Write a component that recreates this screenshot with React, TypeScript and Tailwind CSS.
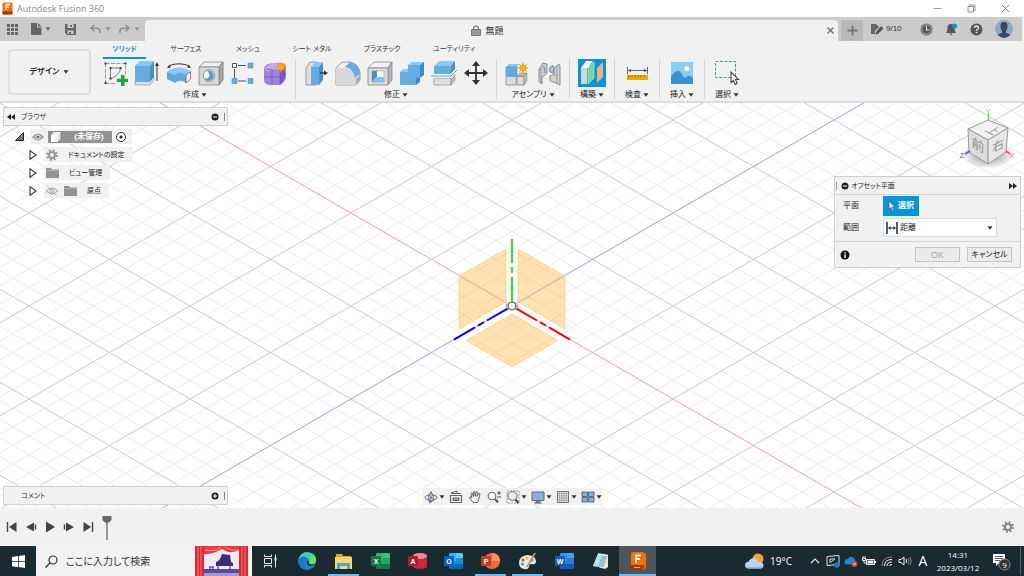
import type { ReactNode } from "react";

const JP = "font-['Liberation_Sans','Noto_Sans_CJK_JP',sans-serif]";

type P = { children: ReactNode; w?: number; h?: number; box?: string };

function Svg({ children, w = 16, h = 16, box }: P) {
  return (
    <svg width={w} height={h} viewBox={box ?? `0 0 ${w} ${h}`} fill="none" className="block shrink-0" aria-hidden="true">
      {children}
    </svg>
  );
}

function Caret({ color = "#333" }: { color?: string }) {
  return (
    <Svg w={6} h={4}>
      <path d="M0.5 0.3h5L3 3.8z" fill={color} />
    </Svg>
  );
}

/* ---------- ribbon icons, 28 x 28 ---------- */

const SketchIcon = () => (
  <Svg w={28} h={28}>
    <path d="M4.5 4.500v20M4.500 4.500h20v11M4.500 24.500h11" stroke="#999" strokeDasharray="4 1.500" />
    <path d="M3.500 3.500h2v2h-2zM23.500 3.500h2v2h-2zM3.500 23h2v2h-2z" fill="#444" />
    <path d="M9.500 8.500v11M9.500 19.500C15 18 19 14 19.500 9.500M9.500 9h10" stroke="#777" />
    <path d="M8.500 8h2v2h-2zM18.500 8h2v2h-2zM8.500 18.500h2v2h-2z" fill="#444" />
    <path d="M20 16h3.500v3.800H27V23h-3.500v4H20v-4h-4v-3.200h4z" fill="#20a64a" />
  </Svg>
);

const ExtrudeIcon = () => (
  <Svg w={28} h={28}>
    <path d="M2 22l4-4h15v3l-4 5H2z" fill="#ddd" stroke="#999" strokeWidth=".7" />
    <path d="M2 7l5-5h14l-4 5z" fill="#8cc8f3" />
    <path d="M2 7h15v16H2z" fill="#64ade3" />
    <path d="M17 7l4-5v16l-4 5z" fill="#4791c9" />
    <path d="M24 22V5" stroke="#333" />
    <path d="M22 7L24 3l2 4z" fill="#333" />
  </Svg>
);

const RevolveIcon = () => (
  <Svg w={28} h={28}>
    <path d="M3.500 7.500C8 4 20 4 24.500 7.500" stroke="#333" />
    <path d="M2 9l2.500-3.500 1.300 3zM26 9l-2.500-3.500-1.300 3z" fill="#333" />
    <path d="M2 13C8 7 20 7 26 13l-5 3c-3-3-8-3-11 0z" fill="#8cc8f3" />
    <path d="M2 13l8 3c3-3 8-3 11 0v8c-3-3-8-3-11 0L2 20z" fill="#5fa9df" />
    <path d="M21 16l4.500-3v7L21 24z" fill="#f3f3f3" stroke="#666" strokeWidth=".8" />
  </Svg>
);

const HoleIcon = () => (
  <Svg w={28} h={28}>
    <path d="M2 8l5-5h19l-4 5z" fill="#eee" stroke="#888" strokeWidth=".8" />
    <path d="M22 8l4-5v18l-4 5z" fill="#a9a9a9" stroke="#777" strokeWidth=".8" />
    <path d="M2 8h20v18H2z" fill="#d7d7d7" stroke="#888" strokeWidth=".8" />
    <circle cx="12" cy="16.500" r="5.800" fill="#f4f4f4" stroke="#777" strokeWidth=".8" />
    <path d="M10 12a5 5 0 1 1-2.500 7.500q5 .5 5-3.500 0-2-2.500-4z" fill="#4e9fd8" />
  </Svg>
);

const PatternIcon = () => (
  <Svg w={28} h={28}>
    <path d="M9 6.500h8M5.500 10v9M9 22h8" stroke="#555" />
    <path d="M3.500 4.500h4v4h-4z" fill="#fff" stroke="#555" />
    <path d="M19 4h5v5h-5zM3 19.500h5v5H3zM19 19.500h5v5h-5z" fill="#64ade3" stroke="#4791c9" strokeWidth=".6" />
  </Svg>
);

const FormIcon = () => (
  <Svg w={28} h={28}>
    <path d="M3 10q0-3 4-5l6-1q11-1 12 3v12q-1 4-6 7H8q-5-1-5-5z" fill="#a183df" />
    <path d="M4 9q5-5 11-5l8 2-5 6H5z" fill="#c5aaf2" />
    <path d="M19 12l5-5v12q-2 4-5 6z" fill="#7e57c2" />
    <path d="M3 18h16l6-4M11 10v16M19 11v15M5 10q7 2 14 1" stroke="#7a55c4" strokeWidth=".8" />
    <Burst x={20} y={8} />
  </Svg>
);

function Burst({ x, y }: { x: number; y: number }) {
  return (
    <g transform={`translate(${x} ${y})`}>
      <path d="M0-6L1.200-2.500 4.200-4.200 2.500-1.200 6 0 2.500 1.200 4.200 4.200 1.200 2.500 0 6-1.200 2.500-4.200 4.200-2.500 1.200-6 0-2.500-1.200-4.200-4.200-1.200-2.500z" fill="#f59b00" />
      <circle r="2.600" fill="#ffae14" />
    </g>
  );
}

const PressPullIcon = () => (
  <Svg w={28} h={28}>
    <path d="M4 9l4-6h6v23H4z" fill="#dedede" stroke="#888" strokeWidth=".8" />
    <path d="M9 8l5-5h7l-4 5z" fill="#8cc8f3" />
    <path d="M9 8h8v18H9z" fill="#64ade3" />
    <path d="M17 8l4-5v18l-4 5z" fill="#4791c9" />
    <path d="M18 14h5" stroke="#333" strokeWidth="1.200" />
    <path d="M22 11.500l4 2.500-4 2.500z" fill="#333" />
  </Svg>
);

const FilletIcon = () => (
  <Svg w={28} h={28}>
    <path d="M2 9l6-6h7c7 1 11 6 11 12v6l-4 5H2z" fill="#ececec" stroke="#888" strokeWidth=".8" />
    <path d="M2 9h9c6 0 11 5 11 11v6H2z" fill="#d8d8d8" />
    <path d="M11 8l5-5c6 0 10 6 10 12l-5 4C20 13 17 9 11 8z" fill="#64ade3" />
    <path d="M22 20l4-4v5l-4 5z" fill="#aaa" />
  </Svg>
);

const ShellIcon = () => (
  <Svg w={28} h={28}>
    <path d="M2 9l6-6h18l-4 6z" fill="#f2f2f2" stroke="#888" strokeWidth=".8" />
    <path d="M22 9l4-6v18l-4 5z" fill="#b5b5b5" stroke="#888" strokeWidth=".8" />
    <path d="M2 9h20v17H2z" fill="#dcdcdc" stroke="#888" strokeWidth=".8" />
    <path d="M6 12h12v11H6z" fill="#fff" stroke="#999" strokeWidth=".6" />
    <path d="M6 12h5v6l-5 5z" fill="#4791c9" />
    <path d="M6 23l5-5h7v5z" fill="#7fc0ee" />
  </Svg>
);

const CombineIcon = () => (
  <Svg w={28} h={28}>
    <path d="M10 6l4-3h12l-4 3z" fill="#8cc8f3" />
    <path d="M2 13l3-3h5v3z" fill="#8cc8f3" />
    <path d="M10 6h12v13h-4v7H2V13h8z" fill="#64ade3" />
    <path d="M22 6l4-3v13l-4 3zM18 19h4v4l-4 3z" fill="#4189c0" />
  </Svg>
);

const SplitIcon = () => (
  <Svg w={28} h={28}>
    <path d="M4 7l5-5h16l-4 5z" fill="#8cc8f3" />
    <path d="M4 7h17v8H4z" fill="#64ade3" />
    <path d="M21 7l4-5v8l-4 5z" fill="#4791c9" />
    <path d="M4 19h17v7H4z" fill="#dedede" stroke="#999" strokeWidth=".8" />
    <path d="M21 19l4-4v6l-4 5z" fill="#bbb" stroke="#888" strokeWidth=".6" />
    <path d="M1 17h20l6-6" stroke="#fff" strokeWidth="3" />
    <path d="M1 17h20l6-6" stroke="#4f9fdb" />
  </Svg>
);

const MoveIcon = () => (
  <Svg w={28} h={28}>
    <path d="M14 5v18M5 14h18" stroke="#2e3136" strokeWidth="1.800" />
    <path d="M14 2l4 5h-8zM14 26l4-5h-8zM2 14l5-4v8zM26 14l-5-4v8z" fill="#2e3136" />
  </Svg>
);

const AssembleIcon = () => (
  <Svg w={28} h={28}>
    <path d="M3 8l3-3h10l-2 3z" fill="#8cc8f3" />
    <path d="M3 8h11v9H3z" fill="#64ade3" stroke="#4791c9" strokeWidth=".6" />
    <path d="M3 17.500h10V26H3zM14 17.500h7V26h-7z" fill="#dcdcdc" stroke="#888" strokeWidth=".8" />
    <path d="M14 17l3-3h7l-3 3zM21 17.500l3-3V22l-3 4z" fill="#bbb" stroke="#888" strokeWidth=".6" />
    <Burst x={20} y={9} />
  </Svg>
);

const JointIcon = () => (
  <Svg w={28} h={28}>
    <path d="M4 10l4-6 4 1v9l-3 3-2 1v7l-3-2z" fill="#d0d0d0" stroke="#777" strokeWidth=".8" />
    <path d="M4 10l2 1v13M6 11l3-5" stroke="#888" strokeWidth=".7" />
    <path d="M9.500 8v6" stroke="#5ba8df" strokeWidth="1.500" />
    <path d="M24 5l-5 4v6l-4 2v5l6 2 4 2V7z" fill="#d0d0d0" stroke="#777" strokeWidth=".8" />
    <path d="M15 8l3-1.500q2 4 0 7.500L15 13q-1.500-2 0-5z" fill="#bbb" stroke="#777" strokeWidth=".7" />
    <path d="M18 7q2 4 0 7" stroke="#5ba8df" strokeWidth="1.300" />
    <path d="M19 15l3 2v7M22 17V7" stroke="#888" strokeWidth=".7" />
  </Svg>
);

const PlaneIcon = () => (
  <Svg w={28} h={28}>
    <path d="M0 0h28v28H0z" fill="#0696d7" />
    <path d="M3 9l5-7h7l-5 7z" fill="#f6f6f6" />
    <path d="M3 9h6v16H3z" fill="#d3d7da" />
    <path d="M10 9l6-6v16l-6 6z" fill="#7ad19b" stroke="#e9fff1" strokeWidth=".5" />
    <path d="M19 9l6-6v15l-6 6z" fill="#f3ae80" />
  </Svg>
);

const MeasureIcon = () => (
  <Svg w={28} h={28}>
    <path d="M4.500 8v7M24.500 8v7M5 11.500h19" stroke="#666" />
    <path d="M5 11.500l3-1.800v3.600zM24 11.500l-3-1.800v3.600z" fill="#555" />
    <path d="M4 16h21v5H4z" fill="#f5a800" />
    <path d="M6 16v2.500M9 16v2M12 16v2.500M15 16v2M18 16v2.500M21 16v2" stroke="#8a5d00" strokeWidth=".8" />
  </Svg>
);

const InsertIcon = () => (
  <Svg w={28} h={28}>
    <path d="M3 3h22v22H3z" fill="#84ccfb" />
    <circle cx="19" cy="9.500" r="2.600" fill="#fffbd6" stroke="#f0d878" strokeWidth=".5" />
    <path d="M3 17c3-2 4-5 7-5s5 6 7 7c2-1 3-3 5-2 1 0 2 2 3 2v6H3z" fill="#3c90cd" />
  </Svg>
);

const SelectIcon = () => (
  <Svg w={28} h={28}>
    <path d="M2.500 2.500h20v16h-20z" stroke="#3aaa64" strokeDasharray="3 1.500" />
    <path d="M18 13v10.500l2.500-2 1.700 4 2-1-1.700-4h3z" fill="#fff" stroke="#444" strokeWidth="1.100" />
  </Svg>
);

const groups: { label: string; pad: string; icons: [string, () => ReactNode][] }[] = [
  {
    label: "作成",
    pad: "px-1",
    icons: [
      ["スケッチを作成", SketchIcon],
      ["押し出し", ExtrudeIcon],
      ["回転", RevolveIcon],
      ["穴", HoleIcon],
      ["パターン", PatternIcon],
      ["フォームを作成", FormIcon],
    ],
  },
  {
    label: "修正",
    pad: "px-1",
    icons: [
      ["プレス/プル", PressPullIcon],
      ["フィレット", FilletIcon],
      ["シェル", ShellIcon],
      ["結合", CombineIcon],
      ["分割", SplitIcon],
      ["移動", MoveIcon],
    ],
  },
  { label: "アセンブリ", pad: "px-1", icons: [["コンポーネント", AssembleIcon], ["ジョイント", JointIcon]] },
  { label: "構築", pad: "px-1.5", icons: [["オフセット平面", PlaneIcon]] },
  { label: "検査", pad: "px-1.5", icons: [["計測", MeasureIcon]] },
  { label: "挿入", pad: "px-1.5", icons: [["画像", InsertIcon]] },
  { label: "選択", pad: "px-1.5", icons: [["選択", SelectIcon]] },
];

const tabs = [
  { label: "ソリッド", w: "w-[43px]" },
  { label: "サーフェス", w: "w-20" },
  { label: "メッシュ", w: "w-11" },
  { label: "シート メタル", w: "w-[84px]" },
  { label: "プラスチック", w: "w-14" },
  { label: "ユーティリティ", w: "w-[88px]" },
];

/* ---------- window chrome ---------- */

function TitleBar() {
  return (
    <header className="flex h-[17px] items-center bg-white pr-0.5">
      <span className="flex flex-1 items-center gap-1 pl-0.5">
        <Svg w={11} h={13}>
          <rect x=".5" y=".5" width="10" height="12" rx="1.500" fill="#ff6b00" />
          <path d="M.5 9.500h10v2q0 1-1 1h-8q-1 0-1-1z" fill="#9c3f04" />
          <path d="M4 8V2.500h4M4 5h3" stroke="#fff" strokeWidth="1.400" />
        </Svg>
        <h1 className="font-['Open_Sans',sans-serif] text-[9px] leading-3 text-[#8a8a8a]">Autodesk Fusion 360</h1>
      </span>
      <button aria-label="最小化" className="flex w-[34px] justify-center"><Svg w={9} h={9}><path d="M.5 4.500h8" stroke="#999" /></Svg></button>
      <button aria-label="元に戻す" className="flex w-[34px] justify-center"><Svg w={9} h={9}><path d="M1 2.500h5.500v5.500H1zM2.500 2.500V1H8v5.500H6.500" stroke="#888" strokeWidth=".9" /></Svg></button>
      <button aria-label="閉じる" className="flex w-[34px] justify-center"><Svg w={9} h={9}><path d="M1 1l7 7M8 1L1 8" stroke="#888" strokeWidth=".9" /></Svg></button>
    </header>
  );
}

function DocumentBar() {
  return (
    <div className="mr-0.5 flex h-6 items-end bg-[#cbcbcb]">
      <div className="flex h-6 w-[145px] items-center pl-[7px]">
        <button aria-label="データ パネル">
          <Svg w={11} h={11}><path d="M0 0h3v3H0zM4 0h3v3H4zM8 0h3v3H8zM0 4h3v3H0zM4 4h3v3H4zM8 4h3v3H8zM0 8h3v3H0zM4 8h3v3H4zM8 8h3v3H8z" fill="#666" /></Svg>
        </button>
        <button aria-label="ファイル" className="ml-3 flex items-center gap-[3px]">
          <Svg w={12} h={12}><path d="M1 0h6v4.500h4.500V12H1z" fill="#666" /><path d="M8 0l3.500 3.500H8z" fill="#666" /></Svg>
          <Caret color="#666" />
        </button>
        <button aria-label="保存" className="ml-3.5">
          <Svg w={11} h={11}><path d="M0 0h11v11H2L0 9z" fill="#666" /><path d="M2.500 0h6v4h-6zM2.500 6.500h6V10h-6z" fill="#cbcbcb" /><path d="M5 1h2v2H5zM4 8h2v2H4z" fill="#666" /></Svg>
        </button>
        <button aria-label="元に戻す" className="ml-3.5 flex items-center gap-1">
          <Svg w={11} h={10}><path d="M4.500 1L1 4.200l3.500 3.300M1.500 4.200H7q3 0 3 3V9" stroke="#8f8f8f" strokeWidth="1.600" /></Svg>
          <Caret color="#8f8f8f" />
        </button>
        <button aria-label="やり直し" className="ml-2 flex items-center gap-1">
          <Svg w={11} h={10}><path d="M6.500 1L10 4.200 6.500 7.500M9.500 4.200H4q-3 0-3 3V9" stroke="#8f8f8f" strokeWidth="1.600" /></Svg>
          <Caret color="#8f8f8f" />
        </button>
      </div>
      <div className="flex h-[21px] flex-1 items-center rounded-t-sm bg-[#f1f1f1] pr-[3px]">
        <span className="flex flex-1 items-center justify-center gap-1 pl-1">
          <Svg w={10} h={11}><path d="M2.500 5V3.500q0-2.500 2.500-2.500t2.500 2.500V5" stroke="#777" strokeWidth="1.200" /><path d="M.5 4.500h9v6h-9z" fill="#999" stroke="#666" strokeWidth=".8" /></Svg>
          <span className="text-[9px] leading-3 text-[#333]">無題</span>
        </span>
        <button aria-label="タブを閉じる"><Svg w={9} h={9}><path d="M1.500 1.500l6 6M7.500 1.500l-6 6" stroke="#666" strokeWidth="1.200" /></Svg></button>
      </div>
      <button aria-label="新しいデザイン" className="ml-[3px] flex h-[21px] w-[22px] items-center justify-center bg-[#b8b8b8]">
        <Svg w={11} h={11}><path d="M5.500.5v10M.5 5.500h10" stroke="#777" strokeWidth="2" /></Svg>
      </button>
      <div className="flex h-6 w-[159px] items-center pl-2">
        <button className="flex items-center gap-0.5 text-[8px] leading-3 text-[#333]">
          <Svg w={13} h={12}><path d="M0 1h5l3 3-4 4v3H0z" fill="#666" /><path d="M10 3l2.500 2.500L7 11l-2.500.5L5 9z" fill="#555" /></Svg>
          9/10
        </button>
        <button aria-label="ジョブ ステータス" className="ml-[18px]">
          <Svg w={13} h={13}><circle cx="6.500" cy="6.500" r="6" fill="#666" /><circle cx="6.500" cy="6.500" r="4.600" stroke="#bbb" strokeWidth=".8" fill="#555" /><path d="M6.500 3v4h3" stroke="#ddd" strokeWidth="1.200" /></Svg>
        </button>
        <button aria-label="通知" className="ml-3">
          <Svg w={13} h={13}><path d="M6 1q3.500 0 3.500 4 0 3 1.500 5H1q1.500-2 1.500-5Q2.500 1 6 1z" fill="#555" /><path d="M4.500 10.500h3L6 12.500z" fill="#555" /><circle cx="9.500" cy="3" r="2.500" fill="#0696d7" /></Svg>
        </button>
        <button aria-label="ヘルプ" className="ml-3">
          <Svg w={13} h={13}><circle cx="6.500" cy="6.500" r="6" fill="#555" /><path d="M4.500 5q0-2 2-2t2 1.800c0 1.400-2 1.400-2 3M6.500 8.800v1.400" stroke="#e8e8e8" strokeWidth="1.400" /></Svg>
        </button>
        <button aria-label="プロファイル" className="ml-3">
          <Svg w={18} h={18}><circle cx="9" cy="9" r="9" fill="#8ea7c6" /><path d="M5.500 7q-.5-5 3.500-5t3.500 5q0 2-1.500 4v2q3 .5 4 2-2.500 3-6 3t-6-3q1-1.500 4-2v-2Q5.500 9 5.500 7z" fill="#38485f" /></Svg>
        </button>
      </div>
    </div>
  );
}

function Ribbon() {
  return (
    <div className="flex h-[62px] border-b-2 border-[#dcdcdc] bg-[#f1f1f1]">
      <button className="mt-2 ml-2 flex h-[46px] w-[83px] shrink-0 items-center justify-center gap-1 rounded-sm border-2 border-[#e0e0e0] text-[8px] font-bold text-[#333]">
        デザイン <Caret />
      </button>
      <div className="flex flex-1 flex-col pl-1">
        <div role="tablist" className="flex h-[18px] pl-2">
          {tabs.map((t, i) => (
            <button
              key={t.label}
              role="tab"
              aria-selected={i === 0}
              className={`${t.w} flex shrink-0 justify-center border-b-2 pt-0.5 text-[7px] leading-3 whitespace-nowrap ${
                i === 0 ? "border-[#0696d7] font-bold text-[#0696d7]" : "border-transparent text-[#333]"
              }`}
            >
              {t.label}
            </button>
          ))}
        </div>
        <div className="flex">
          {groups.map((g) => (
            <section key={g.label} aria-label={g.label} className={`${g.pad} h-10 border-r border-[#d4d4d4] last:border-0`}>
              <div className="flex">
                {g.icons.map(([name, Icon]) => (
                  <button key={name} aria-label={name} className="flex w-8 justify-center">
                    <Icon />
                  </button>
                ))}
              </div>
              <button className="mx-auto flex items-center gap-0.5 pt-0.5 text-[8px] leading-3 whitespace-nowrap text-[#222]">
                {g.label} <Caret />
              </button>
            </section>
          ))}
        </div>
      </div>
    </div>
  );
}

/* ---------- model canvas ---------- */

const DX = 16.1;
const DY = 9.3;

function Scene() {
  const lines = [];
  for (let k = -60; k <= 60; k++) {
    if (k === 0) continue;
    lines.push({ k, major: k % 5 === 0, c: k * DY * 2, run: 80 * DX, rise: 80 * DY });
  }
  const sorted = [...lines.filter((l) => !l.major), ...lines.filter((l) => l.major)];
  return (
    <svg className="absolute inset-0 block h-full w-full" viewBox="-512 -203 1024 405" preserveAspectRatio="xMidYMid slice" fill="none" aria-hidden="true">
      {sorted.map((l) => (
        <path
          key={l.k}
          d={`M${-l.run} ${l.c - l.rise}L${l.run} ${l.c + l.rise}M${-l.run} ${l.c + l.rise}L${l.run} ${l.c - l.rise}`}
          stroke={l.major ? "#cbcbcb" : "#ececec"}
        />
      ))}
      <path d={`M${-80 * DX} ${-80 * DY}L${80 * DX} ${80 * DY}`} stroke="#ff9c9c" />
      <path d={`M${-80 * DX} ${80 * DY}L${80 * DX} ${-80 * DY}`} stroke="#9c9cff" />
      <g fill="#ffb432" fillOpacity=".38" stroke="#ffc870" strokeOpacity=".6">
        <path d="M-6-57L-53-30V23L-6-4z" />
        <path d="M6-57L53-30V23L6-4z" />
        <path d="M0 8L46 34.500 0 61-46 34.500z" />
      </g>
      <g strokeWidth="2">
        <path d="M0-67V-43M0-39V-33M0-29V-4" stroke="#1ef01e" />
        <path d="M4 2.300L25 14.500M28 16.200L34 19.700M37 21.400L58 33.700" stroke="#f00" />
        <path d="M-4 2.300L-25 14.500M-28 16.200L-34 19.700M-37 21.400L-58 33.700" stroke="#00f" />
      </g>
      <ellipse cx="0" cy="0" rx="6" ry="3.500" fill="#ccc" stroke="#aaa" />
      <circle r="3.800" fill="#f3f3f3" stroke="#777" strokeWidth="1.300" />
    </svg>
  );
}

function ViewCube() {
  return (
    <svg className="absolute top-1 right-2 block" width="58" height="62" viewBox="0 0 58 62" aria-label="ビュー キューブ">
      <defs>
        <radialGradient id="cubeShadow"><stop offset="0" stopColor="#888" /><stop offset="1" stopColor="#888" stopOpacity="0" /></radialGradient>
      </defs>
      <ellipse cx="30" cy="48" rx="26" ry="14" fill="url(#cubeShadow)" />
      <path d="M10 22L30 13 50 21 30 33z" fill="#f1f1f1" stroke="#999" />
      <path d="M10 22L30 33V57L11 45z" fill="#dedede" stroke="#999" />
      <path d="M50 21L30 33V57L48 45z" fill="#e6e6e6" stroke="#999" />
      <path d="M30.500 13V6" stroke="#4be64b" strokeWidth="1.500" />
      <path d="M12 44l-5 3" stroke="#5555ff" strokeWidth="2" />
      <path d="M48 44l4 3" stroke="#ff5555" strokeWidth="2" />
      <g className="font-['Liberation_Sans','Noto_Sans_CJK_JP',sans-serif]" fill="#909090" textAnchor="middle">
        <text fontSize="11" transform="translate(31 26) rotate(28) skewX(-30)">上</text>
        <text fontSize="13" transform="translate(20 43) skewY(28)">前</text>
        <text fontSize="12" transform="translate(40 43) skewY(-28)">右</text>
        <text x="30" y="7" fontSize="8" fill="#7be67b">Y</text>
        <text x="4" y="51" fontSize="8" fill="#6666ff">Z</text>
        <text x="54" y="51" fontSize="8" fill="#ff6b6b">X</text>
      </g>
    </svg>
  );
}

const Gear = ({ s = 12, color = "#999" }: { s?: number; color?: string }) => (
  <Svg w={s} h={s} box="0 0 12 12">
    <circle cx="6" cy="6" r="4.800" stroke={color} strokeWidth="2.200" strokeDasharray="1.900 1.870" />
    <circle cx="6" cy="6" r="3" stroke={color} strokeWidth="2" />
  </Svg>
);

const Folder = () => (
  <Svg w={13} h={11}><path d="M0 1h5l1 1.500h7V11H0z" fill="#929292" /><path d="M0 3.500h13" stroke="#bbb" strokeWidth=".7" /></Svg>
);

const Eye = ({ off = false }: { off?: boolean }) => (
  <Svg w={12} h={10}>
    <path d="M.5 5Q6-1 11.500 5 6 11 .5 5z" stroke="#999" fill={off ? "none" : "#aaa"} />
    <circle cx="6" cy="5" r="2" stroke={off ? "#aaa" : "#eee"} fill={off ? "none" : "#666"} />
    {off && <path d="M1.500.5l9 9" stroke="#aaa" />}
  </Svg>
);

const Arrow = () => (
  <Svg w={8} h={10}><path d="M1 .8L7 5 1 9.300z" fill="#fff" stroke="#444" strokeWidth="1.200" /></Svg>
);

function RoundMark({ plus = false }: { plus?: boolean }) {
  return (
    <Svg w={8} h={8}>
      <circle cx="4" cy="4" r="3.500" fill="#222" />
      <path d={plus ? "M2 4h4M4 2v4" : "M2 4h4"} stroke="#fff" />
    </Svg>
  );
}

function PanelBar({ label, plus = false }: { label: string; plus?: boolean }) {
  return (
    <div className="flex h-[19px] w-[225px] items-center border border-[#d0d0d0] bg-[#f1f1f1] pr-px pl-[3px]">
      <span className="w-3.5">
        {!plus && <Svg w={8} h={6}><path d="M4 0v6L0 3zM8 0v6L4 3z" fill="#222" /></Svg>}
      </span>
      <h2 className="flex-1 text-[7px] leading-3 text-[#333]">{label}</h2>
      <button aria-label={plus ? "展開" : "折りたたむ"} className="mr-[5px]"><RoundMark plus={plus} /></button>
      <span className="h-2 w-0.5 border-l border-[#888]" />
    </div>
  );
}

function BrowserTree() {
  return (
    <div className="absolute top-1 left-[3px]">
      <PanelBar label="ブラウザ" />
      <ul className="flex flex-col gap-[3px] pt-[3px] text-[7px] leading-3 text-[#222]">
        <li className="flex items-center pl-3">
          <button aria-label="折りたたむ"><Svg w={9} h={9}><path d="M8.500.5v8h-8z" fill="#777" stroke="#222" /></Svg></button>
          <span className="ml-1.5 flex h-[15px] items-center bg-[#f1f1f1] pr-1.5">
            <button aria-label="表示" className="mx-0.5"><Eye /></button>
            <span className="ml-0.5 flex h-3 w-16 items-center bg-[#929292] pl-0.5 font-bold text-white">
              <Svg w={12} h={12}><path d="M1 4l3-3h7v7l-3 3H1z" fill="#ddd" stroke="#777" strokeWidth=".6" /><path d="M1 4h7v7H1z" fill="#fff" /><path d="M1 4l3-3h7L8 4z" fill="#eef3fa" /></Svg>
              <span className="flex-1 pl-1 text-center text-[8px]">(未保存)</span>
            </span>
            <input type="radio" defaultChecked aria-label="アクティブ化" className="ml-1 size-2.5 appearance-none rounded-full border border-[#333] bg-[radial-gradient(circle,#222_1px,#fff_2px)]" />
          </span>
        </li>
        {[
          { label: "ドキュメントの設定", icons: <Gear />, gap: "ml-2.5 pr-2" },
          { label: "ビュー管理", icons: <Folder />, gap: "ml-2.5 pr-2" },
          { label: "原点", icons: <><Eye off /><Folder /></>, gap: "ml-2.5 pr-2" },
        ].map((r) => (
          <li key={r.label} className="flex items-center pl-[26px]">
            <button aria-label="展開"><Arrow /></button>
            <span className="ml-[7px] flex h-[15px] items-center bg-[#f1f1f1] pl-0.5">
              <span className="flex items-center gap-1.5">{r.icons}</span>
              <span className={r.gap}>{r.label}</span>
            </span>
          </li>
        ))}
      </ul>
    </div>
  );
}

function OffsetDialog() {
  return (
    <form className="absolute top-[73px] right-[3px] w-[187px] border border-[#cdcdcd] bg-[#f1f1f1] text-[8px] leading-3 text-[#222]" onSubmit={(e) => e.preventDefault()}>
      <div className="flex h-[18px] items-center gap-0.5 border-b border-[#d5d5d5] pr-[3px] pl-px">
        <span className="mr-0.5 h-2 border-l border-[#999]" />
        <RoundMark />
        <h2 className="flex-1 text-[7px]">オフセット平面</h2>
        <button type="button" aria-label="展開"><Svg w={8} h={6}><path d="M0 0v6l4-3zM4 0v6l4-3z" fill="#222" /></Svg></button>
      </div>
      <div className="flex h-[46px] flex-col gap-0.5 pt-px pl-2">
        <div className="flex items-center">
          <span className="w-10">平面</span>
          <button type="button" className="flex h-5 w-9 items-center justify-center gap-0.5 bg-[#0696d7] font-bold text-white">
            <Svg w={8} h={12}><path d="M1 1v8l2-1.500L4.500 11 6 10.300 4.500 7H7z" fill="#ddd" stroke="#555" strokeWidth=".6" /></Svg>
            選択
          </button>
        </div>
        <div className="flex items-center">
          <label htmlFor="extent" className="w-10">範囲</label>
          <div className="flex h-[19px] w-[114px] items-center gap-px border border-[#dcdcdc] bg-white pr-[3px] pl-px">
            <Svg w={14} h={12}><path d="M2 0v12M12 0v12" stroke="#123a68" strokeWidth="1.600" /><path d="M4 6h6" stroke="#333" /><path d="M3 6l2.500-2v4zM11 6L8.500 4v4z" fill="#333" /></Svg>
            <select id="extent" className="flex-1 appearance-none bg-transparent text-[8px] outline-none">
              <option>距離</option>
            </select>
            <Caret />
          </div>
        </div>
      </div>
      <div className="flex h-[26px] items-center gap-[7px] border-t border-[#d5d5d5] pr-2 pl-[5px]">
        <span className="flex-1">
          <Svg w={10} h={10}><circle cx="5" cy="5" r="4.500" fill="#111" /><path d="M5 2v1.500M5 4.300V8" stroke="#fff" strokeWidth="1.400" /></Svg>
        </span>
        <button type="button" disabled className="h-[15px] w-[45px] border border-[#c4c4c4] bg-[#ebebeb] text-[9px] text-[#aaa]">OK</button>
        <button type="button" className="h-[15px] w-[45px] border border-[#c4c4c4] bg-[#ebebeb] text-[8px] whitespace-nowrap">キャンセル</button>
      </div>
    </form>
  );
}

const navItems: { name: string; caret: boolean; icon: ReactNode }[] = [
  { name: "オービット", caret: true, icon: <><ellipse cx="8" cy="8.500" rx="6" ry="2.600" stroke="#666" /><path d="M6 12.500Q4.500 7 8 2.500q3.500 4.500 2 10" stroke="#666" /><path d="M6 14l1-3 2.500 2z" fill="#555" /><circle cx="8" cy="8.500" r="1.300" fill="#2b8ed6" /></> },
  { name: "ビュー正面", caret: false, icon: <><path d="M2.500 6.500h11v7h-11z" stroke="#666" strokeWidth="1.200" /><path d="M5 9h6v2.500H5z" fill="#aaa" stroke="#666" /><path d="M3 4l6-2v2M3 4.500h10" stroke="#666" /></> },
  { name: "画面移動", caret: false, icon: <path d="M6 13.500L2.500 9q-.5-1.500 1-1L5 9.200 3.800 4.500q.5-1.500 1.500 0L6.500 7.500 6.300 3q.8-1.500 1.500 0l.4 4.200L9 3q1-1.200 1.500.2L10 7.500l1.700-3q1.300-.7 1.200.7L11.500 11l-1 2.500z" fill="#fff" stroke="#555" strokeWidth=".9" /> },
  { name: "ズーム", caret: false, icon: <><circle cx="6" cy="7" r="3.800" stroke="#666" fill="#fff" strokeWidth="1.100" /><path d="M9 10l3 3.500" stroke="#555" strokeWidth="2" /><path d="M11 4h4M13 2v4M11 8h4" stroke="#555" /></> },
  { name: "窓ズーム", caret: true, icon: <><path d="M2 2h12v12H2z" stroke="#999" strokeDasharray="2 1" /><circle cx="7.500" cy="7" r="4.500" fill="#e3eff0" stroke="#666" /><path d="M10.500 10.500l3 3.500" stroke="#444" strokeWidth="2" /></> },
  { name: "表示設定", caret: true, icon: <><path d="M2 3h12v8.500H2z" fill="#86afdd" stroke="#666" /><path d="M6 12h4v2H6zM4 14h8" fill="#888" stroke="#777" /></> },
  { name: "グリッド", caret: true, icon: <><path d="M2.500 2.500h11v11h-11z" fill="#fafafa" stroke="#666" /><path d="M4.700 2v12M6.900 2v12M9.100 2v12M11.300 2v12M2 4.700h12M2 6.900h12M2 9.100h12M2 11.300h12" stroke="#888" strokeWidth=".7" /></> },
  { name: "ビューポート", caret: true, icon: <path d="M2 3h5.500v4.500H2zM8.500 3H14v4.500H8.500zM2 8.500h5.500V13H2zM8.500 8.500H14V13H8.500z" fill="#86afdd" stroke="#456" strokeWidth=".8" /> },
];

function NavBar() {
  return (
    <nav className="absolute inset-x-0 bottom-[3px] flex justify-center">
      <div className="flex h-[17px] items-center gap-[3px] bg-[#f1f1f1]">
        {navItems.map((n) => (
          <button key={n.name} aria-label={n.name} className="flex items-center">
            <Svg>{n.icon}</Svg>
            {n.caret && <Caret />}
          </button>
        ))}
      </div>
    </nav>
  );
}

/* ---------- timeline and taskbar ---------- */

function Timeline() {
  const b = [
    ["先頭へ", "M2.500 2v10", "M11.500 2v10L4 7z"],
    ["前へ", "M11.500 4.500v5", "M10 2.500v9L2 7z"],
    ["再生", "", "M3 1.500l9 5.500-9 5.500z"],
    ["次へ", "M2.500 4.500v5", "M4 2.500v9L12 7z"],
    ["最後へ", "M11.500 2v10", "M2.500 2v10L10 7z"],
  ];
  return (
    <footer className="flex h-[38px] items-center bg-[#f1f1f1] pr-2.5 pl-[5px]">
      <div className="flex gap-[5px]">
        {b.map(([name, bar, tri]) => (
          <button key={name} aria-label={name}><Svg w={14} h={14}><path d={bar} stroke="#444" strokeWidth="1.400" /><path d={tri} fill="#444" /></Svg></button>
        ))}
      </div>
      <span className="flex-1 pt-0.5 pl-[7px]"><Svg w={10} h={24}><path d="M.5 0h9v4L7 6.500H3L.5 4z" fill="#666" /><path d="M5 5v19" stroke="#666" strokeWidth="1.300" /></Svg></span>
      <button aria-label="設定"><Gear s={12} color="#888" /></button>
    </footer>
  );
}

function OfficeIcon({ letter, dark, main, light, round = false }: { letter: string; dark: string; main: string; light: string; round?: boolean }) {
  return (
    <Svg w={19} h={18}>
      {round ? (
        <><circle cx="11" cy="9" r="8" fill={main} /><path d="M11 1a8 8 0 0 1 8 8h-8z" fill={light} /></>
      ) : (
        <><rect x="5" y="1" width="14" height="16" rx="1.500" fill={main} /><path d="M5 2.500Q5 1 6.500 1H12v8H5z" fill={light} fillOpacity=".6" /><path d="M12 1h5.500Q19 1 19 2.500V6h-7z" fill={light} /><path d="M5 12h14v3.500q0 1.500-1.500 1.500h-11Q5 17 5 15.500z" fill={dark} /></>
      )}
      <rect x="0" y="4" width="10" height="10" rx="1" fill={dark} />
      <text x="5" y="11.500" textAnchor="middle" fontSize="7" fontWeight="bold" fill="#fff">{letter}</text>
    </Svg>
  );
}

const apps: { name: string; state?: "open" | "active"; icon: ReactNode }[] = [
  { name: "タスク ビュー", icon: <Svg w={14} h={14}><path d="M1.500.5v2h7v-2M1.500 13.500v-2h7v2M1.500 4.500h7v5h-7zM12.500.5v13" stroke="#eee" /><path d="M11.500 3.500h2v3h-2z" fill="#eee" /></Svg> },
  { name: "Edge", icon: <Svg w={18} h={18}><circle cx="9" cy="9" r="9" fill="#1684d6" /><path d="M1 7Q3 0 9.500 0 18 1 18 8q0 4-5 4-3 0-2-3 0-4-5-4-3 0-5 2z" fill="#42cfae" /><path d="M13 1.500q5 2.500 5 7 0 3.500-4 3.500-3 0-3-2z" fill="#68df65" /><path d="M1 7q3-3 7-2-4 2-3 6 1 5 7 6-6 2-10-3-3-3-1-7z" fill="#1d75cc" /><path d="M11 9q-1 5 6 3-2 2-5 2-4-1-3-4 .5-2 2-1z" fill="#182b34" /></Svg> },
  { name: "エクスプローラー", state: "open", icon: <Svg w={17} h={15}><path d="M1 0h6l1 2h8v3H1z" fill="#e5a424" /><path d="M0 3h17v12H0z" fill="#ffd766" /><path d="M2 9h13v6h-3v-3H5v3H2z" fill="#4f9fe0" /></Svg> },
  { name: "Excel", icon: <OfficeIcon letter="X" dark="#107c41" main="#21a366" light="#33c481" /> },
  { name: "Access", icon: <Svg w={19} h={18}><path d="M5 4q0-3 7-3t7 3v10q0 3-7 3t-7-3z" fill="#c62840" /><ellipse cx="12" cy="4" rx="7" ry="3" fill="#f08a9a" /><rect y="4" width="10" height="10" rx="1" fill="#a71d36" /><text x="5" y="11.500" textAnchor="middle" fontSize="7" fontWeight="bold" fill="#fff">A</text></Svg> },
  { name: "Outlook", icon: <OfficeIcon letter="O" dark="#0a64b9" main="#1490df" light="#50d0ff" /> },
  { name: "PowerPoint", state: "open", icon: <OfficeIcon letter="P" dark="#c43e1c" main="#ed6c47" light="#ff8f6b" round /> },
  { name: "ペイント", state: "open", icon: <Svg w={19} h={18}><path d="M1 11Q1 4 9 3q8 0 9 6 0 4-5 3-2 0-2 3-1 3-5 2Q1 16 1 11z" fill="#dcebf5" /><circle cx="5" cy="8" r="1.500" fill="#e5413d" /><circle cx="9" cy="6" r="1.500" fill="#f6b52b" /><circle cx="4.500" cy="12" r="1.500" fill="#3cad54" /><circle cx="14" cy="8" r="1.500" fill="#318bd0" /><path d="M17 1L9 15" stroke="#d39149" strokeWidth="1.800" /></Svg> },
  { name: "Word", icon: <OfficeIcon letter="W" dark="#185abd" main="#2b7cd3" light="#41a5ee" /> },
  { name: "メモ帳", icon: <Svg w={17} h={17}><path d="M6 1l10 1.500L13 15 1 13z" fill="#9ed0dc" /><path d="M16 2.500V14l-3 2-6-1.500z" fill="#e7e4d8" /><path d="M6 1l9 1.500L11.500 14 1 13z" fill="#8fc3cf" /><path d="M6 1l4 .7L6 13.500 1 13z" fill="#b8e2e9" /><path d="M6 1l10 1.500" stroke="#f6f6f6" strokeWidth="1.500" /></Svg> },
  { name: "Fusion 360", state: "active", icon: <Svg w={16} h={18}><path d="M1 2q0-2 2-2h10l3 2v12q0 4-3 4H1z" fill="#ff6b00" /><path d="M0 13h14v3q0 2-2 2H0z" fill="#9a3d08" /><path d="M6 11V3.500h5M6 7h4" stroke="#fff" strokeWidth="1.900" /><path d="M4 15.500h6" stroke="#e2b091" /></Svg> },
];

function Piano() {
  return (
    <svg width="53" height="30" viewBox="0 0 53 30" className="block shrink-0" aria-hidden="true">
      <path d="M0 0h53v30H0z" fill="#eeeaf6" />
      <path d="M8 23h37v4H8z" fill="#5d4a9c" />
      <path d="M8 27h37v3H8z" fill="#a59bd0" />
      <path d="M21 16q4-1 6-8l8 1 1 7 2 1v3H21z" fill="#3d2c76" />
      <path d="M23 20v4M35 20v4M14 21h5M15 21v3M18 21v3" stroke="#3d2c76" />
      <path d="M6 0h41q-3 7-14 6l-6-3-6 3Q12 9 8 8z" fill="#e63c42" />
      <path d="M10 4q10 2 16-3M44 4q-9 1-14-3" stroke="#ff9594" fill="none" />
      <path d="M0 0h9v30H0zM44 0h9v30h-9z" fill="#d82a33" />
      <path d="M3 0v30M6 0v30M47 0v30M50 0v30" stroke="#ff7474" />
    </svg>
  );
}

function Taskbar() {
  return (
    <div className="flex h-[30px] items-center bg-[#1a2a31] text-white">
      <button aria-label="スタート" className="flex w-9 justify-center">
        <Svg w={13} h={13}><path d="M0 2l6-1v5.200H0zM6.800.9L13 0v6.200H6.800zM0 7h6v5.200l-6-1zM6.800 7H13v6l-6.200-.9z" fill="#fff" /></Svg>
      </button>
      <label className="flex h-full w-[216px] items-center bg-[#f2f2f2] pr-1 pl-[9px]">
        <Svg w={13} h={13}><circle cx="8" cy="5" r="4" stroke="#333" strokeWidth="1.200" /><path d="M5 8l-4.500 4.500" stroke="#333" strokeWidth="1.200" /></Svg>
        <input aria-label="検索" placeholder="ここに入力して検索" className="ml-2 w-0 flex-1 bg-transparent text-[10px] outline-none placeholder:text-[#333]" />
        <Piano />
      </label>
      <div className="grid h-full w-[404px] grid-cols-11">
        {apps.map((a) => (
          <button
            key={a.name}
            aria-label={a.name}
            className={`relative flex items-center justify-center ${a.state === "active" ? "bg-[#4a575d]" : ""}`}
          >
            {a.icon}
            {a.state && <span className={`absolute bottom-0 h-0.5 bg-[#76b9ed] ${a.state === "active" ? "inset-x-0" : "inset-x-[3px]"}`} />}
          </button>
        ))}
      </div>
      <div className="flex flex-1 items-center justify-end font-['Open_Sans',sans-serif]">
        <button className="flex items-center gap-1.5 text-[10px]">
          <Svg w={19} h={16}><circle cx="13" cy="6" r="5.500" fill="#f8a13a" /><path d="M4 15.500q-4 0-4-3.300Q0 9 3.500 8.700 5 5 8.500 5.200 12 5.500 13 9q5-.5 5.500 3 0 3.500-3.500 3.500z" fill="#b9d3f6" /><path d="M1 14q7 1 17-1-.5 2.500-3 2.500H4q-2 0-3-1.500z" fill="#8fb5ee" /></Svg>
          19°C
        </button>
        <div className="ml-4 flex items-center gap-1">
          <button aria-label="隠れているインジケーター"><Svg w={14} h={14}><path d="M3 9l4-4 4 4" stroke="#eee" strokeWidth="1.100" /></Svg></button>
          <button aria-label="ディスプレイ"><Svg w={14} h={14}><path d="M1 2.500l12-1v9l-12 1z" stroke="#ddd" /><path d="M4 9V5h5M5 8l4-3" stroke="#ddd" /><circle cx="11" cy="11" r="2.800" fill="#2277c9" /></Svg></button>
          <button aria-label="OneDrive"><Svg w={14} h={14}><path d="M3 10.500q-3 0-2.500-3Q1 5 4 5q1-3 4.500-2 2.500 1 2.500 3.500 2 .5 2 2t-2 2z" fill="#2088d8" /><circle cx="10.500" cy="10" r="3" fill="#d83b30" /><path d="M9.500 9l2 2M11.500 9l-2 2" stroke="#fff" strokeWidth=".8" /></Svg></button>
          <button aria-label="バッテリー"><Svg w={14} h={14}><path d="M4.500 5.500h8v5h-8z" stroke="#eee" /><path d="M5.500 6.500h6v3h-6zM12.500 7H14v2h-1.500z" fill="#eee" /><path d="M1 2v3M3 2v3M.5 4.500h3v2h-3zM2 6v3h2" stroke="#eee" /></Svg></button>
          <button aria-label="ネットワーク"><Svg w={14} h={14}><path d="M2 12Q2 3 12 3" stroke="#888" /><path d="M4.500 12q0-6.500 7.500-6.500M7 12q0-4 5-4M9.500 12q0-1.500 2.500-1.500" stroke="#eee" /></Svg></button>
          <button aria-label="音量"><Svg w={14} h={14}><path d="M1 5.500h2L6 3v8L3 8.500H1z" stroke="#eee" /><path d="M8 5q1 2 0 4" stroke="#eee" /><path d="M10 4q2 3 0 6M12 3q2.500 4 0 8" stroke="#889" /></Svg></button>
          <button className="w-3.5 text-center text-[14px] leading-4">A</button>
        </div>
        <time className="w-14 text-center text-[8px] leading-[13px]">14:31<br />2023/03/12</time>
        <button aria-label="通知" className="ml-1.5 flex">
          <Svg w={20} h={20}>
            <path d="M1 3h12v9H7l-3 3v-3H1z" fill="#fff" /><path d="M3 5.500h8M3 7.500h8M3 9.500h5" stroke="#333" strokeWidth=".8" />
            <circle cx="12.500" cy="13.500" r="5.500" fill="#333" stroke="#888" />
            <text x="12.500" y="16.500" textAnchor="middle" fontSize="8" fill="#fff">9</text>
          </Svg>
        </button>
        <span className="mr-[3px] ml-2 h-7 border-l border-[#55636a]" />
      </div>
    </div>
  );
}

export default function App() {
  return (
    <div className={`${JP} flex min-h-screen flex-col bg-[#f1f1f1] [font-feature-settings:'palt']`}>
      <TitleBar />
      <DocumentBar />
      <Ribbon />
      <main className="relative min-h-96 flex-1 overflow-hidden bg-white">
        <Scene />
        <BrowserTree />
        <ViewCube />
        <OffsetDialog />
        <div className="absolute bottom-[3px] left-[3px]"><PanelBar label="コメント" plus /></div>
        <NavBar />
      </main>
      <Timeline />
      <Taskbar />
    </div>
  );
}
